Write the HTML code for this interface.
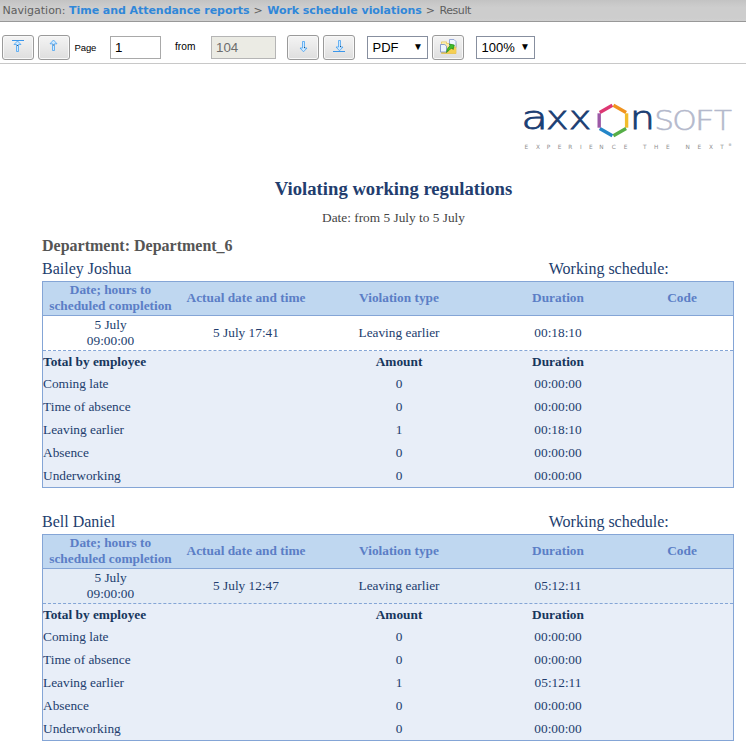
<!DOCTYPE html>
<html><head><meta charset="utf-8"><title>Result</title>
<style>
html,body{margin:0;padding:0;background:#fff;}
body{width:746px;height:744px;position:relative;overflow:hidden;font-family:"Liberation Serif",serif;}
.abs{position:absolute;white-space:nowrap;}
#nav{position:absolute;left:0;top:0;width:746px;height:21px;background:linear-gradient(#c3c3c3 0,#cdcdcd 35%,#cdcdcd 85%,#d0d0d0 100%);border-bottom:1px solid #989898;}
#navt{left:2.5px;top:3px;font-family:"DejaVu Sans","Liberation Sans",sans-serif;font-size:11px;color:#5e5e5e;line-height:16px;}
#navt b{color:#3087d9;letter-spacing:-0.05px}#navt i{font-style:normal;letter-spacing:.5px}
#tbline{position:absolute;left:0;top:63px;width:746px;height:1px;background:#c8c8c8;}
.btn{position:absolute;top:35px;width:30px;height:23px;border:1px solid #9a9a9a;border-radius:3px;background:linear-gradient(#f4f4f4,#dedede);box-shadow:inset 0 0 0 1px #f8f8f8;}
.btn svg{position:absolute;left:0;top:0}
.lbl{font-family:"Liberation Sans",sans-serif;font-size:11px;color:#000;}
.inp{position:absolute;top:36px;height:21px;border:1px solid #a9a9a9;background:#fff;font-family:"Liberation Sans",sans-serif;font-size:13.33px;line-height:21px;color:#000;}
.sel{font-size:13px;border-color:#878f9f}
.t{font-family:"Liberation Serif",serif;color:#223d6e;font-size:13.33px;line-height:15px;}
.tbl{position:absolute;left:42px;width:692px;border:1px solid #84a5d6;box-sizing:border-box;background:#e8eef8;}
.hd{position:absolute;left:0;top:0;width:690px;height:33px;background:#bfd7f0;border-bottom:1px solid #84a5d6;}
.h{font-weight:bold;color:#5b7ec6;font-size:13.33px;line-height:15px;text-align:center;font-family:"Liberation Serif",serif;position:absolute;white-space:nowrap;}
.c{position:absolute;white-space:nowrap;text-align:center;font-size:13.33px;line-height:15px;color:#223d6e;font-family:"Liberation Serif",serif;}
.row{position:absolute;left:0;top:34px;width:690px;height:34px;border-bottom:1px dashed #84a5d6;}
.b{font-weight:bold;color:#17365d}
</style></head><body>
<div id="nav"></div>
<div id="navt" class="abs">Navigation: <b>Time and Attendance reports</b><i> &gt; </i><b>Work schedule violations</b><i> &gt; </i><span style="letter-spacing:-0.4px">Result</span></div>
<div id="tbline"></div>

<div class="btn" style="left:2px"><svg width="30" height="23" viewBox="0 0 30 23"><path d="M9 4.500H21" stroke="#3a96ea" fill="none"/><path d="M14.500 5L11 8.500H13.500V15.500H15.500V8.500H18Z" fill="#cfe9ff" stroke="#3f9df0" stroke-width=".75" stroke-linejoin="miter"/><rect x="14" y="9" width="1" height="1" fill="#234" opacity=".8"/></svg></div>
<div class="btn" style="left:38px"><svg width="30" height="23" viewBox="0 0 30 23"><path d="M14.500 4L11 7.800H13.500V14.500H15.500V7.800H18Z" fill="#cfe9ff" stroke="#3f9df0" stroke-width=".75"/><rect x="14" y="8.500" width="1" height="1" fill="#234" opacity=".8"/></svg></div>
<div class="abs lbl" style="left:74.500px;top:41.600px;font-size:9.500px;line-height:12px;letter-spacing:-0.1px">Page</div>
<div class="inp" style="left:110px;width:49px;"><span style="padding-left:4px">1</span></div>
<div class="abs lbl" style="left:175px;top:41px;font-size:10.200px">from</div>
<div class="inp" style="left:211px;width:63px;background:#ebebe4;color:#6d6d6d;border-color:#b5b5b5"><span style="padding-left:4px">104</span></div>
<div class="btn" style="left:287px"><svg width="30" height="23" viewBox="0 0 30 23"><path d="M14.500 5.500H16.500V12H19L15.500 15.800L12 12H14.500Z" fill="#cfe9ff" stroke="#3f9df0" stroke-width=".75"/><rect x="16" y="11" width="1" height="1" fill="#234" opacity=".8"/></svg></div>
<div class="btn" style="left:323px"><svg width="30" height="23" viewBox="0 0 30 23"><path d="M9 15.500H21" stroke="#3a96ea" fill="none"/><path d="M14.500 4.500H16.500V11H19L15.500 14.800L12 11H14.500Z" fill="#cfe9ff" stroke="#3f9df0" stroke-width=".75"/><rect x="16" y="10" width="1" height="1" fill="#234" opacity=".8"/></svg></div>
<div class="inp sel" style="left:367px;width:59px;"><span style="padding-left:4.500px">PDF</span><span style="position:absolute;right:4px;top:-1px;font-size:10px">&#9660;</span></div>
<div class="btn" style="left:432px"><svg width="30" height="23" viewBox="0 0 30 23">
<defs><linearGradient id="fg" x1="0" y1="0" x2="0" y2="1"><stop offset="0" stop-color="#fdf3c0"/><stop offset=".45" stop-color="#f9e48f"/><stop offset="1" stop-color="#f2c53d"/></linearGradient></defs>
<path d="M8.500 7.500V5.900h5V7.500H23v10H8.500z" fill="url(#fg)" stroke="#e3bd4a" stroke-width=".7"/>
<path d="M16.500 3.500h4.500l2 2v6h-6.500z" fill="#f1f7fe" stroke="#8c9fd2" stroke-width=".9"/>
<path d="M13.500 17.300h9.300v-6.800h-5.300z" fill="#f5cf52"/>
<path d="M7.500 8.500h4.300l1.700 1.700v5.800h-6z" fill="#edf4fd" stroke="#7e93c8" stroke-width=".9"/>
<path d="M13.600 16.600c.3-3.600 1.800-5.800 3.800-6.900l-1-1.600 4.900.9-1.200 4.500-.9-1.500c-2.200 1-3.700 2.600-5.600 4.600z" fill="#3fbe2b" stroke="#1d8714" stroke-width=".7"/>
</svg></div>
<div class="inp sel" style="left:476px;width:57px;"><span style="padding-left:4.500px">100%</span><span style="position:absolute;right:4px;top:-1px;font-size:10px">&#9660;</span></div>

<!-- logo -->
<svg class="abs" style="left:515px;top:90px" width="231" height="70" viewBox="0 0 231 70">
<g font-family="'DejaVu Sans Light','DejaVu Sans',sans-serif" font-weight="200">
<text transform="translate(6.20 39.400) scale(1.384 1)" font-size="31.500" fill="#1b3e73" stroke="#1b3e73" stroke-width="0.8">a</text>
<text transform="translate(31.10 39.400) scale(1.213 1)" font-size="31.500" fill="#1b3e73" stroke="#1b3e73" stroke-width="0.8">x</text>
<text transform="translate(53.80 39.400) scale(1.213 1)" font-size="31.500" fill="#1b3e73" stroke="#1b3e73" stroke-width="0.8">x</text>
<text transform="translate(114.70 39.400) scale(1.266 1)" font-size="31.500" fill="#1b3e73" stroke="#1b3e73" stroke-width="0.8">n</text>
<text transform="translate(139.3 40.100) scale(1.2 1)" font-size="26" fill="#b4b9cc" stroke="#b4b9cc" stroke-width="0.5">S</text>
<text transform="translate(157.3 40.100) scale(1.2 1)" font-size="26" fill="#b4b9cc" stroke="#b4b9cc" stroke-width="0.5">O</text>
<text transform="translate(179.8 40.100) scale(1.33 1)" font-size="26" fill="#b4b9cc" stroke="#b4b9cc" stroke-width="0.5">F</text>
<text transform="translate(199.1 40.100) scale(1.13 1)" font-size="26" fill="#b4b9cc" stroke="#b4b9cc" stroke-width="0.5">T</text>
<text y="58.700" x="9.4 21.1 31.7 42.8 53.3 65.1 74.0 84.3 96.8 108.7 118.8 128.1 139.1 151.1 161.8 170.4 182.4 194.1 205.3" font-size="5.800" fill="#8f8f8f" font-family="'DejaVu Sans',sans-serif" font-weight="400">EXPERIENCE THE NEXT</text>
<text y="55.800" x="213.300" font-size="3.500" fill="#8c8c8c" font-family="'DejaVu Sans',sans-serif" font-weight="400">®</text>
</g>
<g fill="none" stroke-width="3.400" stroke-linecap="butt">
<path d="M84.720 22.500L97.380 15.300" stroke="#dd3773"/>
<path d="M98.420 15.300L111.080 22.500" stroke="#f0931e"/>
<path d="M111.600 23.300V37.700" stroke="#f2bd2c"/>
<path d="M111.080 38.500L98.420 45.700" stroke="#56ae47"/>
<path d="M97.380 45.700L84.720 38.500" stroke="#2386c8"/>
<path d="M84.200 37.700V23.300" stroke="#9b59a6"/>
</g>
</svg>

<div class="abs" style="left:0;width:787px;top:179px;text-align:center;font-weight:bold;font-size:18.67px;line-height:20px;color:#223d6e;">Violating working regulations</div>
<div class="abs" style="left:0;width:787px;top:210px;text-align:center;font-size:13.33px;line-height:15px;color:#444;">Date: from 5 July to 5 July</div>
<div class="abs" style="left:42px;top:237px;font-weight:bold;font-size:16px;line-height:18px;color:#555;">Department: Department_6</div>

<div class="abs" style="left:42px;top:260px;font-size:16px;line-height:18px;color:#223d6e;">Bailey Joshua</div>
<div class="abs" style="left:548.8px;top:260px;font-size:16px;line-height:18px;color:#223d6e;">Working schedule:</div>
<div class="tbl" style="top:281px;height:207px;">
  <div class="hd"></div>
  <div class="h" style="left:-1px;width:137px;top:0px;line-height:16px">Date; hours to<br>scheduled completion</div>
  <div class="h" style="left:137px;width:132px;top:8px">Actual date and time</div>
  <div class="h" style="left:290px;width:132px;top:8px">Violation type</div>
  <div class="h" style="left:449px;width:132px;top:8px">Duration</div>
  <div class="h" style="left:573px;width:132px;top:8px">Code</div>
  <div class="row" style="background:#fff"></div>
  <div class="c" style="left:-1px;width:137px;top:35px;line-height:16px">5 July<br>09:00:00</div>
  <div class="c" style="left:137px;width:132px;top:43px">5 July 17:41</div>
  <div class="c" style="left:290px;width:132px;top:43px">Leaving earlier</div>
  <div class="c" style="left:449px;width:132px;top:43px">00:18:10</div>
  <div class="c b" style="left:0px;top:72px">Total by employee</div>
  <div class="c b" style="left:290px;width:132px;top:72px">Amount</div>
  <div class="c b" style="left:449px;width:132px;top:72px">Duration</div>
  <div class="c" style="left:0px;top:94px">Coming late</div><div class="c" style="left:290px;width:132px;top:94px">0</div><div class="c" style="left:449px;width:132px;top:94px">00:00:00</div>
  <div class="c" style="left:0px;top:117px">Time of absence</div><div class="c" style="left:290px;width:132px;top:117px">0</div><div class="c" style="left:449px;width:132px;top:117px">00:00:00</div>
  <div class="c" style="left:0px;top:140px">Leaving earlier</div><div class="c" style="left:290px;width:132px;top:140px">1</div><div class="c" style="left:449px;width:132px;top:140px">00:18:10</div>
  <div class="c" style="left:0px;top:163px">Absence</div><div class="c" style="left:290px;width:132px;top:163px">0</div><div class="c" style="left:449px;width:132px;top:163px">00:00:00</div>
  <div class="c" style="left:0px;top:186px">Underworking</div><div class="c" style="left:290px;width:132px;top:186px">0</div><div class="c" style="left:449px;width:132px;top:186px">00:00:00</div>
</div>

<div class="abs" style="left:42px;top:513px;font-size:16px;line-height:18px;color:#223d6e;">Bell Daniel</div>
<div class="abs" style="left:548.8px;top:513px;font-size:16px;line-height:18px;color:#223d6e;">Working schedule:</div>
<div class="tbl" style="top:534px;height:207px;">
  <div class="hd"></div>
  <div class="h" style="left:-1px;width:137px;top:0px;line-height:16px">Date; hours to<br>scheduled completion</div>
  <div class="h" style="left:137px;width:132px;top:8px">Actual date and time</div>
  <div class="h" style="left:290px;width:132px;top:8px">Violation type</div>
  <div class="h" style="left:449px;width:132px;top:8px">Duration</div>
  <div class="h" style="left:573px;width:132px;top:8px">Code</div>
  <div class="row" style="background:#e4ecf6"></div>
  <div class="c" style="left:-1px;width:137px;top:35px;line-height:16px">5 July<br>09:00:00</div>
  <div class="c" style="left:137px;width:132px;top:43px">5 July 12:47</div>
  <div class="c" style="left:290px;width:132px;top:43px">Leaving earlier</div>
  <div class="c" style="left:449px;width:132px;top:43px">05:12:11</div>
  <div class="c b" style="left:0px;top:72px">Total by employee</div>
  <div class="c b" style="left:290px;width:132px;top:72px">Amount</div>
  <div class="c b" style="left:449px;width:132px;top:72px">Duration</div>
  <div class="c" style="left:0px;top:94px">Coming late</div><div class="c" style="left:290px;width:132px;top:94px">0</div><div class="c" style="left:449px;width:132px;top:94px">00:00:00</div>
  <div class="c" style="left:0px;top:117px">Time of absence</div><div class="c" style="left:290px;width:132px;top:117px">0</div><div class="c" style="left:449px;width:132px;top:117px">00:00:00</div>
  <div class="c" style="left:0px;top:140px">Leaving earlier</div><div class="c" style="left:290px;width:132px;top:140px">1</div><div class="c" style="left:449px;width:132px;top:140px">05:12:11</div>
  <div class="c" style="left:0px;top:163px">Absence</div><div class="c" style="left:290px;width:132px;top:163px">0</div><div class="c" style="left:449px;width:132px;top:163px">00:00:00</div>
  <div class="c" style="left:0px;top:186px">Underworking</div><div class="c" style="left:290px;width:132px;top:186px">0</div><div class="c" style="left:449px;width:132px;top:186px">00:00:00</div>
</div>
</body></html>
